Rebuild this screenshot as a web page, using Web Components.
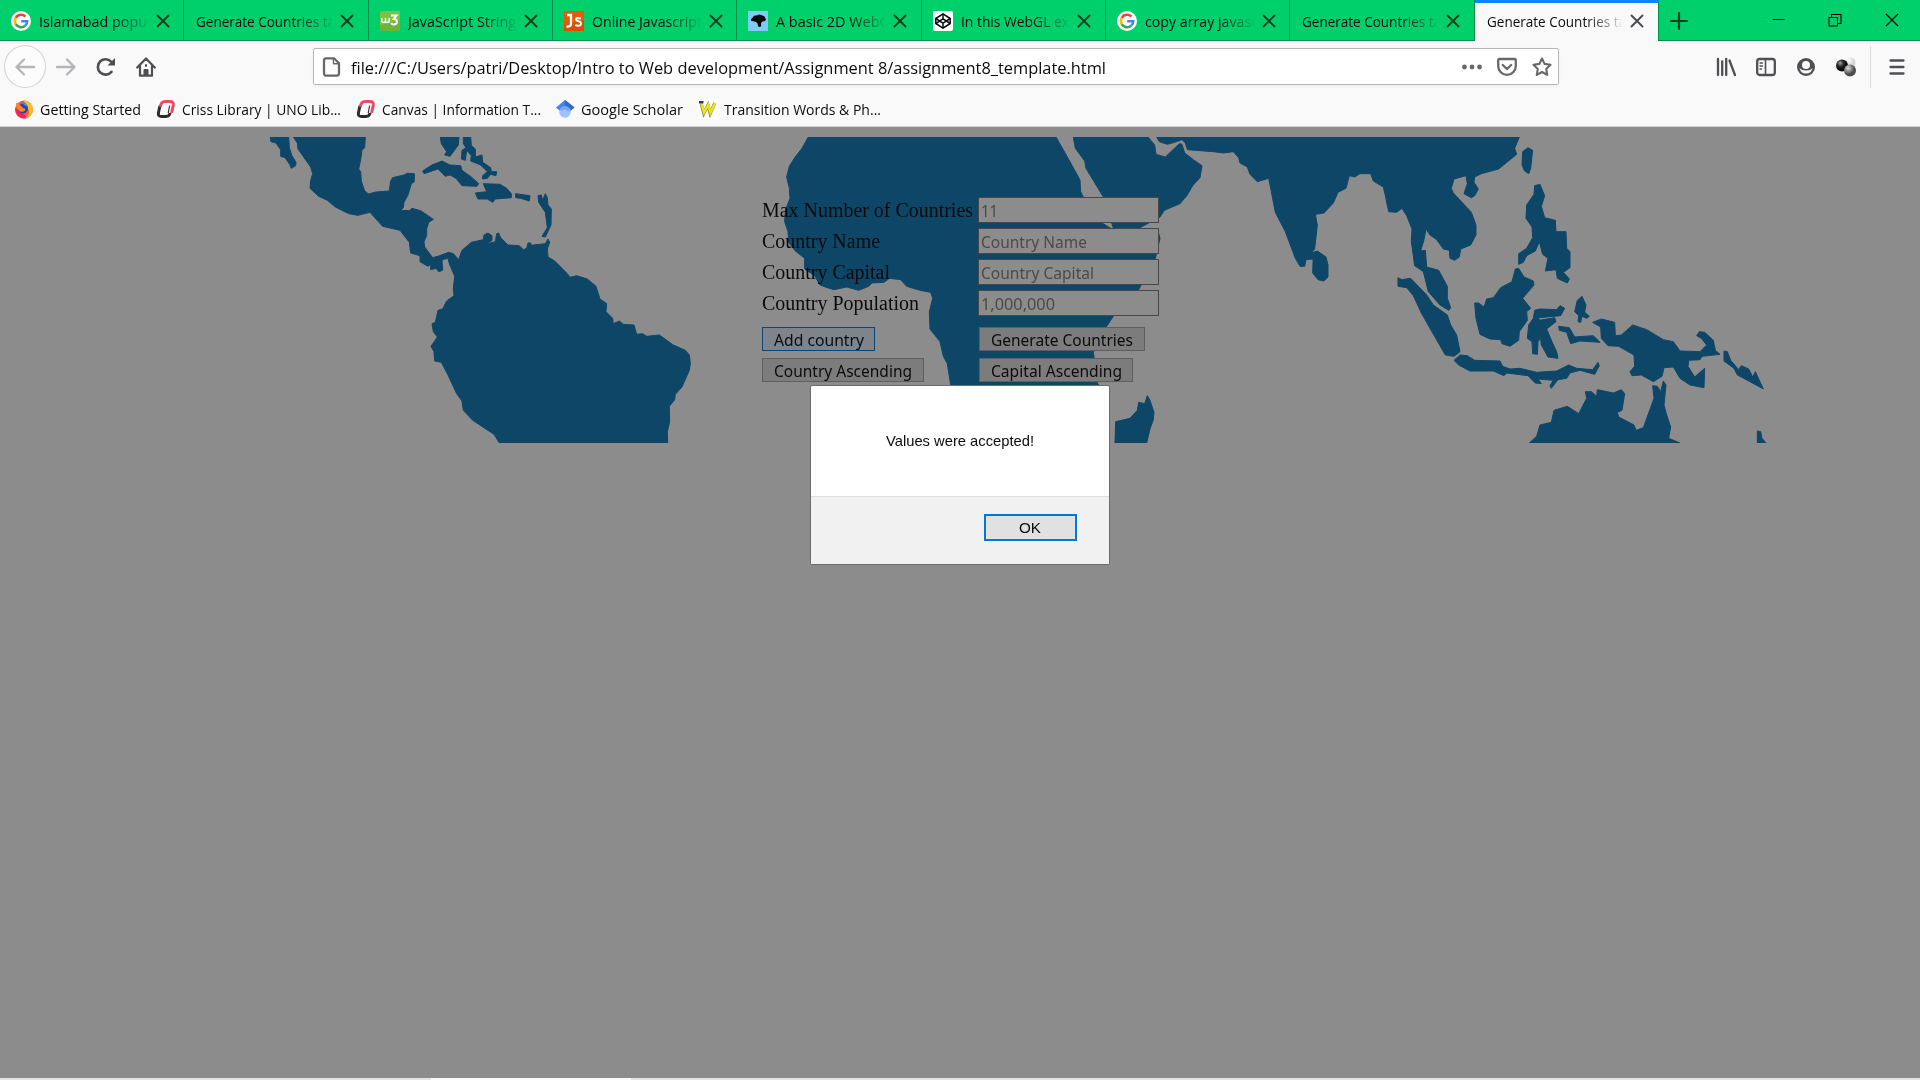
<!DOCTYPE html>
<html lang="en">
<head>
<meta charset="utf-8">
<title>Generate Countries table</title>
<style>
html,body{margin:0;padding:0;height:1080px;overflow:hidden;background:#8c8c8c}
</style>
</head>
<body>
<browser-window>
  <tab-strip slot="tabs">
    <browser-tab icon="google"><fit-text slot="title" w="108">Islamabad popu</fit-text></browser-tab>
    <browser-tab><fit-text slot="title" w="139">Generate Countries ta</fit-text></browser-tab>
    <browser-tab icon="w3"><fit-text slot="title" w="108">JavaScript String</fit-text></browser-tab>
    <browser-tab icon="js"><fit-text slot="title" w="110">Online Javascript</fit-text></browser-tab>
    <browser-tab icon="dino"><fit-text slot="title" w="114">A basic 2D WebG</fit-text></browser-tab>
    <browser-tab icon="codepen"><fit-text slot="title" w="108">In this WebGL ex</fit-text></browser-tab>
    <browser-tab icon="google"><fit-text slot="title" w="113">copy array javasc</fit-text></browser-tab>
    <browser-tab><fit-text slot="title" w="139">Generate Countries ta</fit-text></browser-tab>
    <browser-tab active><fit-text slot="title" w="139">Generate Countries ta</fit-text></browser-tab>
  </tab-strip>
  <nav-bar slot="nav"><fit-text w="755" size="16.7">file:///C:/Users/patri/Desktop/Intro to Web development/Assignment 8/assignment8_template.html</fit-text></nav-bar>
  <bookmark-bar slot="bookmarks">
    <book-mark icon="firefox"><fit-text w="101">Getting Started</fit-text></book-mark>
    <book-mark icon="uno"><fit-text w="159">Criss Library | UNO Lib...</fit-text></book-mark>
    <book-mark icon="uno"><fit-text w="159">Canvas | Information T...</fit-text></book-mark>
    <book-mark icon="scholar"><fit-text w="102">Google Scholar</fit-text></book-mark>
    <book-mark icon="w"><fit-text w="157">Transition Words &amp; Ph...</fit-text></book-mark>
  </bookmark-bar>
  <country-page></country-page>
</browser-window>
<script>
const ICONS = {
  google:'<svg viewBox="0 0 20 20"><circle cx="10" cy="10" r="10" fill="#fff"/><g fill="none" stroke-width="2.6"><path d="M14.4 5.6A6.2 6.2 0 0 0 4.7 6.8" stroke="#ea4335"/><path d="M4.7 6.8a6.2 6.2 0 0 0 0 6.4" stroke="#fbbc05"/><path d="M4.7 13.2a6.2 6.2 0 0 0 9.5 1.4" stroke="#34a853"/><path d="M14.2 14.6q2-1.7 2-4.4H10.2" stroke="#4285f4"/></g></svg>',
  w3:'<svg viewBox="0 0 20 20"><rect width="20" height="20" rx="1.5" fill="#7fc242"/><path d="M0 14L20 9v11H0z" fill="#6eb43a"/><path d="M1.8 7v3q0 1.5 1.8 1.5T5.500 10V7v3q0 1.500 1.800 1.500T9.200 10V7" fill="none" stroke="#fff" stroke-width="1.500"/><path d="M11 4.500h5.500L13.700 8q3.600.2 3.200 3.200-.6 2.600-3.600 2.200-1.600-.2-2.200-1.600" fill="none" stroke="#fff" stroke-width="2"/></svg>',
  js:'<svg viewBox="0 0 20 20"><rect width="20" height="20" fill="#d65200"/><path d="M0 0h20v9L0 14z" fill="#e35d08"/><path d="M3 4h4v8.500q0 3.500-4.500 3" fill="none" stroke="#fff" stroke-width="2.300"/><path d="M17 7.500q-5-1.500-5 .8c0 2.500 5 1.500 5 4.200 0 2.800-3.500 2.500-5.700 1.500" fill="none" stroke="#fff" stroke-width="2"/></svg>',
  dino:'<svg viewBox="0 0 20 20"><rect width="20" height="20" fill="#80cbf5"/><path d="M3 8.200L5 6.300 6 4.800 9.500 4.300 11 3.500 14 4.200 16.500 5.500 18 8.500 17 10 13.800 10.800 13 12.500 13.200 15.200 11.500 16 10.200 15.600 9.500 12.500 8 11 5.500 10.300 3.300 10z" fill="#070707"/></svg>',
  codepen:'<svg viewBox="0 0 20 20"><rect width="20" height="20" rx="2" fill="#fff"/><g fill="none" stroke="#0b0b0b" stroke-width="1.500" stroke-linejoin="round"><path d="M10 2.800l7.200 4.700v5l-7.200 4.700-7.200-4.700v-5z"/><path d="M2.800 7.500l7.200 4.700 7.200-4.700M2.800 12.500L10 7.800l7.200 4.700M10 2.800v5M10 12.200v5"/></g></svg>',
  firefox:'<svg viewBox="0 0 20 20"><circle cx="10" cy="10.500" r="9" fill="#ff5a2e"/><path d="M1.200 9Q1 15 5 18q4 2.500 8.500 1L6 12z" fill="#f5225c"/><path d="M9 1q9 1 10 9-1 8-8 9.500 6-5 3-10Q12 5 9 1z" fill="#ffbd1f"/><circle cx="9" cy="9.500" r="5" fill="#2c3fc4"/><path d="M2 4q4 1 7 5 3 0 2 2.500-2 2-5 1-4-3-4-8.500z" fill="#ff8a1a"/><path d="M7 2q5 1 7 6-3-1-4-2T7 2z" fill="#3a8dea"/></svg>',
  uno:'<svg viewBox="0 0 20 20"><rect width="20" height="20" fill="#fff"/><g fill="none"><path d="M14.200 14Q13.300 17.500 10 17.500H5.500Q1.800 17.500 2.400 14L4 6.500" stroke="#2b2b2b" stroke-width="3"/><path d="M4.300 8Q5 2.500 9 2.500h5q3.900 0 3.300 3.600L15.600 14" stroke="#ee4a62" stroke-width="3"/><path d="M13.700 6.500L12.200 14" stroke="#3b2c2f" stroke-width="1.200"/></g></svg>',
  scholar:'<svg viewBox="0 0 20 20"><path d="M10 1L1 8.500 5 12h10l4.500-3.500z" fill="#4285f4"/><path d="M10 1l9.500 7.500L15 12l-5-4z" fill="#3566c8"/><circle cx="10" cy="13" r="5.800" fill="#a0c3ff"/><path d="M4.700 10.600a5.800 5.800 0 0 1 10.600 0L13 12.500Q10 9.500 7 12z" fill="#76a7fa"/></svg>',
  w:'<svg viewBox="0 0 20 20"><rect width="20" height="20" fill="#fff"/><path d="M3 4l2.800 10.500L10 6l2.200 8.500L16.800 4" fill="none" stroke="#8a8a60" stroke-width="3.200"/><path d="M3.300 4l2.800 9.500L10.300 6l2.200 7.500L17.100 4" fill="none" stroke="#f0e414" stroke-width="2.500"/><path d="M1 3.200h4.500" stroke="#30308c" stroke-width="2.400"/></svg>'
};
function element(name, markup) {
  customElements.define(name, class extends HTMLElement {
    constructor() {
      super();
      this.attachShadow({mode:'open'}).innerHTML = typeof markup === 'function' ? markup(this) : markup;
    }
  });
}

element('browser-window', `<style>
:host{display:flex;flex-direction:column;width:1920px;height:1080px;background:#8c8c8c;font-family:"Open Sans",sans-serif;color:#0c0c0d}
.bars{background:#f9f9fa;height:85px;border-bottom:1px solid #d0d0d1;display:flex;flex-direction:column}
.page{flex:1;min-height:0}
.edge{height:2px;background:#e5e5e5;display:flex}.edge i{width:200px;margin-left:431px;background:#fafafa}
</style><slot name="tabs"></slot><div class="bars"><slot name="nav"></slot><slot name="bookmarks"></slot></div><div class="page"><slot></slot></div><div class="edge"><i></i></div>`);

element('tab-strip', `<style>
:host{display:flex;height:41px;background:linear-gradient(#00d06c 40px,#008f4a 40px)}
.tabs{display:flex;width:1659px}
.plus{width:40px;display:flex;align-items:center;justify-content:center}
.win{margin-left:auto;margin-right:7px;display:flex;align-items:flex-start}
.win svg{width:56.500px;height:39px}
</style><div class="tabs"><slot></slot></div>
<div class="plus"><svg width="18" height="18" viewBox="0 0 18 18"><path d="M9 1v16M1 9h16" stroke="#07421f" stroke-width="2.200" stroke-linecap="round"/></svg></div>
<div class="win">
<svg viewBox="0 0 56.500 39"><path d="M28.500 19.500h12" stroke="#000" stroke-width="1"/></svg>
<svg viewBox="0 0 56.500 39"><path d="M29 17.500h8.500v8.500H29zM31.500 17.500v-3H41v9h-3.500" fill="none" stroke="#000" stroke-width="1.100"/></svg>
<svg viewBox="0 0 56.500 39"><path d="M29 14l12 12M41 14L29 26" stroke="#000" stroke-width="1.100"/></svg></div>`);

element('browser-tab', e => `<style>
:host{display:flex;flex:1 1 0;min-width:0;box-sizing:border-box;align-items:center;height:41px;padding:1px 13.500px 0 12px;border-right:1px solid #008f4a;--x:#08401f}
:host([active]){background:#f9f9fa;border-top:3px solid #0a84ff;padding-top:0;padding-bottom:2px;--x:#4a4a4f}
.ico{width:20px;height:20px;margin:0 8px 0 -1px;flex:none}.ico svg{display:block;width:20px;height:20px}
.t{flex:1;min-width:0;overflow:hidden;height:26px;line-height:26px;-webkit-mask-image:linear-gradient(to left,transparent 0,rgba(0,0,0,.4) 12px,#000 38px);mask-image:linear-gradient(to left,transparent 0,rgba(0,0,0,.4) 12px,#000 38px)}
.c{width:14px;height:14px;flex:none;margin-left:7px}
</style>${e.hasAttribute('icon')?`<span class="ico">${ICONS[e.getAttribute('icon')]}</span>`:''}<div class="t"><slot name="title"></slot></div>
<svg class="c" viewBox="0 0 14 14"><path d="M1.500 1.500l11 11M12.500 1.500l-11 11" stroke="var(--x)" stroke-width="1.900" stroke-linecap="round"/></svg>`);

element('nav-bar', `<style>
:host{display:flex;align-items:center;height:51px;box-sizing:border-box;padding-left:4px}
svg{display:block;flex:none;fill:none;stroke:#4f4f53;stroke-width:2.300;stroke-linecap:round;stroke-linejoin:round}
.left{display:flex;align-items:center;width:309px;flex:none}
.back{width:40px;height:41px;border:1px solid #d2d2d3;border-radius:50%;background:#fcfcfc;display:flex;align-items:center;justify-content:center}
.fwd{margin-left:10px}.rel{margin-left:20px}.home{margin-left:20px}
.url{display:flex;flex:none;align-items:center;width:1246px;height:37px;box-sizing:border-box;border:1px solid #b8b8ba;border-radius:2px;background:#fff;padding:0 6px 0 8px;box-shadow:0 1px 3px rgba(0,0,0,.06)}
.txt{margin-left:9px;flex:1;line-height:24px;padding-top:2px}
.url svg{stroke:#68686b}
.acts{display:flex;gap:15px}
.right{display:flex;flex:none;align-items:center;margin-left:157px;gap:20px}
.sep{width:1px;height:42px;background:#dcdcdd;margin:0 -2px 0 -6px}
</style>
<div class="left">
<div class="back"><svg width="20" height="20" viewBox="0 0 20 20" style="stroke:#b5b5b7"><path d="M19 10H1.500M9 2.500L1.500 10 9 17.500"/></svg></div>
<svg class="fwd" width="20" height="20" viewBox="0 0 20 20" style="stroke:#b5b5b7"><path d="M1 10h17.500M11 2.500l7.500 7.500-7.500 7.500"/></svg>
<svg class="rel" width="20" height="20" viewBox="0 0 20 20"><path d="M15.500 14.800A7.700 7.700 0 1 1 15.500 5" stroke-width="2.600"/><path d="M11.500 8.500h7.500V1z" fill="#4f4f53" stroke="none"/></svg>
<svg class="home" width="20" height="20" viewBox="0 0 20 20"><path d="M1.200 10.500L10 1.500l8.800 9M4 9v9.700h12V9" stroke-width="2.200"/><path d="M8 18v-5.500h4V18" fill="#4f4f53" stroke-width="1"/><path d="M10 8v1" stroke-width="2"/></svg>
</div>
<div class="url"><svg width="20" height="20" viewBox="0 0 20 20"><path d="M4 1.300h8l5 5v10q0 2.400-2.400 2.400H4.400Q2 18.700 2 16.300V3.300q0-2 2-2z"/><path d="M11.500 1.500v5.300H17" stroke-width="1.400"/></svg>
<div class="txt"><slot></slot></div><div class="acts">
<svg width="20" height="20" viewBox="0 0 20 20"><g fill="#68686b" stroke="none"><circle cx="2.500" cy="10" r="2.400"/><circle cx="10" cy="10" r="2.400"/><circle cx="17.500" cy="10" r="2.400"/></g></svg>
<svg width="20" height="20" viewBox="0 0 20 20"><path d="M2.500 2h15q1.300 0 1.300 1.300V9a8.800 8.800 0 0 1-17.600 0V3.300Q1.200 2 2.500 2z"/><path d="M5.800 8l4.200 4 4.200-4"/></svg>
<svg width="20" height="20" viewBox="0 0 20 20"><path d="M10 1.500l2.600 5.400 5.900.8-4.300 4.200 1 6L10 15l-5.200 2.900 1-6L1.500 7.700l5.900-.8z" stroke-width="2.100"/></svg>
</div></div>
<div class="right">
<svg width="20" height="20" viewBox="0 0 20 20"><path d="M2 2v16M6.200 4.500V18M10.200 2v16M13.500 3.500L19 18" style="stroke-width:2.300"/></svg>
<svg width="20" height="20" viewBox="0 0 20 20"><rect x="1.200" y="2" width="17.600" height="16" rx="2.500"/><path d="M9.500 2v16" stroke-width="1.600"/><path d="M4 6h2.500M4 9h2.500M4 12h1.500" stroke-width="1.300"/></svg>
<svg width="20" height="20" viewBox="0 0 20 20" style="stroke:none"><circle cx="10" cy="10" r="9" fill="#4f4f53"/><circle cx="10" cy="8" r="4" fill="#f9f9fa"/><path d="M3.500 11q1 5.500 6.500 5.500t6.500-5.500q-2 2.500-6.500 2.500T3.500 11z" fill="#f9f9fa"/></svg>
<svg width="20" height="20" viewBox="0 0 20 20" style="stroke:none"><defs><radialGradient id="a" cx=".35" cy=".3"><stop offset="0" stop-color="#aaa"/><stop offset=".5" stop-color="#333"/><stop offset="1" stop-color="#0a0a0a"/></radialGradient><radialGradient id="b" cx=".35" cy=".3"><stop offset="0" stop-color="#ddd"/><stop offset="1" stop-color="#4c4c4c"/></radialGradient><radialGradient id="c" cx=".35" cy=".3"><stop offset="0" stop-color="#fff"/><stop offset="1" stop-color="#d3d3d3"/></radialGradient></defs><circle cx="14.500" cy="5.500" r="5" fill="url(#c)"/><circle cx="6" cy="8.500" r="6" fill="url(#a)"/><circle cx="14" cy="13.500" r="6" fill="url(#b)"/></svg>
<i class="sep"></i>
<svg width="16" height="20" viewBox="0 0 16 20"><path d="M1.500 3.500h13M1.500 10h13M1.500 16.500h13"/></svg>
</div>`);

element('bookmark-bar', `<style>:host{display:flex;align-items:center;height:34px;padding:0 0 0 14px;gap:14.800px}</style><slot></slot>`);
element('book-mark', e => `<style>:host{display:flex;align-items:center;gap:6px;line-height:24px}svg{width:20px;height:20px;display:block}</style>${ICONS[e.getAttribute('icon')]}<slot></slot>`);

element('world-map', `<style>:host{display:block}svg{display:block;filter:blur(.35px)}</style>
<svg width="1904" height="306" viewBox="8 137 1904 306" fill="#0e4668" stroke="#0e4668" stroke-width="3" stroke-linejoin="round">
<g transform="translate(250 125) scale(.33333)">
<path d="M61 36L116 36L118 68L126 92L138 112L137 122L124 130L119 118L105 98L92 94L92 74L78 54L63 50Z"/>
<path d="M130 36L346 36L344 68L336 76L332 104L326 132L332 140L334 168L344 198L356 207L378 201L418 198L422 168L428 158L462 150L472 145L493 146L493 170L484 176L474 210L462 232L460 248L452 256L478 257L486 250L512 257L550 283L536 292L530 312L530 332L522 350L524 366L548 398L566 393L596 382L610 386L626 404L636 376L664 352L700 344L702 330L714 324L726 332L726 346L712 356L736 350L740 326L746 324L752 338L766 352L774 360L808 362L820 374L830 370L834 354L842 354L844 361L886 356L894 342L899 352L892 372L894 396L914 408L936 430L952 446L960 457L980 452L1012 462L1038 484L1050 522L1070 536L1068 560L1088 580L1090 596L1108 588L1120 598L1152 600L1160 628L1178 626L1190 634L1228 630L1270 660L1306 676L1318 690L1321 716L1318 736L1296 786L1276 808L1274 824L1258 844L1259 890L1252 920L1253 954L748 954L732 928L668 886L640 856L636 828L620 806L594 750L574 712L554 708L552 680L543 664L562 636L550 620L546 596L556 592L564 556L578 552L590 528L612 512L610 490L614 454L598 416L594 400L576 404L578 436L566 440L558 430L542 434L542 418L534 424L510 410L510 392L482 384L478 352L450 316L398 304L360 262L324 271L296 266L256 246L232 226L206 214L180 190L182 166L188 146L182 126L158 92L144 72L142 54Z"/>
<path d="M571 36L627 36L625 60L600 94L584 90L590 80L574 56ZM640 36L662 36L664 62L676 72L676 96L696 90L698 112L722 128L724 140L740 140L738 152L722 148L712 160L698 162L698 152L712 140L692 120L662 108L664 92L650 76L646 106L634 102L636 76L648 68L640 56ZM518 138L546 120L576 108L600 120L632 122L636 136L664 156L686 176L680 184L636 182L618 160L600 150L586 154L564 132L522 146ZM700 176L750 178L770 190L784 206L784 218L736 222L728 232L712 222L684 222L676 204L710 200ZM797 206L840 212L838 228L812 220L797 218ZM864 212L874 210L878 226L886 206L892 218L894 240L904 252L903 300L886 336L876 334L892 308L886 262L866 232Z"/></g>
<g transform="translate(740 125) scale(.33333)"><path d="M205 36L186 70L164 98L148 124L140 156L148 190L150 220L136 256L134 290L144 320L146 352L166 378L194 400L194 432L224 452L240 480L262 488L282 494L320 486L356 496L386 484L396 474L432 472L448 460L482 464L500 484L540 496L572 502L578 520L568 560L570 612L600 650L610 694L622 716L632 780L640 800L1088 800L1070 770L1062 696L1060 682L1100 604L1120 574L1196 494L1246 400L1260 340L1254 318L1115 312L1080 290L1030 216L1022 200L1020 165L990 110L948 36Z"/></g>
<g transform="translate(1050 125) scale(.33333)"><path d="M70 36H294L314 60L318 88L346 96L388 56L396 58L404 84L430 104L456 122L450 158L428 182L412 210L390 236L343 256L330 276L270 308L190 309L160 216L108 130L104 108L76 70Z"/>
<path d="M320 36L328 50L352 58L374 52L396 44L406 54L412 74L490 80L520 84L550 80L566 98L570 114L592 126L600 148L622 170L656 160L662 190L676 262L706 320L736 400L750 424L764 424L768 404L790 402L788 378L794 372L802 300L796 268L822 264L850 234L864 202L888 190L898 152L914 156L930 146L962 146L970 168L1000 186L1006 212L1016 260L1040 262L1056 250L1070 272L1086 312L1084 350L1094 422L1120 440L1135 500L1170 540L1196 556L1202 548L1192 520L1192 484L1166 436L1130 426L1126 376L1112 378L1122 344L1128 312L1140 330L1160 344L1180 372L1198 376L1200 400L1214 406L1228 396L1232 372L1262 360L1278 330L1278 300L1264 262L1210 204L1204 190L1212 162L1248 152L1252 176L1242 206L1264 218L1274 212L1285 192L1272 172L1274 156L1294 146L1346 132L1400 88L1394 70L1408 36Z"/>
<path d="M790 382L802 378L828 396L834 420L834 456L822 468L804 464L788 444ZM292 812L300 826L312 862L310 884L300 912L290 954L195 954L197 890L240 880L262 856L266 832L284 836Z"/></g>
<g transform="translate(1380 125) scale(.33333)">
<path d="M428 80L444 68L458 76L452 130L446 146L434 138L426 120Z"/>
<path d="M464 182L480 178L494 212L484 244L494 278L526 286L528 320L558 320L560 370L570 380L570 428L550 442L568 462L562 474L532 460L528 434L496 438L504 400L488 388L478 350L466 378L440 392L430 412L416 418L416 386L440 370L458 338L456 306L438 280L440 240L462 208Z"/>
<path d="M54 458L66 464L92 460L140 510L160 540L202 570L212 600L230 630L240 680L222 694L196 690L150 610L124 564L100 512L80 488L54 484Z"/>
<path d="M222 706L240 690L262 692L284 706L360 708L368 724L390 732L420 730L470 742L530 738L566 720L590 730L638 734L654 712L658 722L644 748L600 736L570 744L560 760L534 764L514 790L510 782L520 766L474 762L484 776L466 774L444 752L380 744L372 752L340 738L270 738L236 720Z"/>
<path d="M284 534L296 534L312 546L320 522L340 518L362 488L396 470L406 432L416 430L432 456L460 468L462 480L428 520L452 550L440 560L442 586L418 620L416 646L390 664L366 656L362 644L330 642L300 628L288 580Z"/>
<path d="M464 556L480 552L530 554L540 542L554 550L542 572L476 578L478 586L524 578L528 590L500 612L516 650L530 680L534 700L504 696L484 660L482 640L474 650L472 688L458 686L456 650L442 640L446 600L460 580Z"/>
<path d="M536 604L568 608L584 636L640 632L660 652L600 648L572 656L560 622L538 616ZM592 526L606 514L618 540L614 562L628 574L620 580L606 574L602 592L594 590L596 572L584 560Z"/>
<path d="M638 592L664 582L704 592L706 632L724 630L758 600L800 614L850 644L880 650L900 678L960 680L980 660L964 640L950 632L958 620L974 622L1000 646L1006 676L1020 688L966 694L960 704L926 706L924 724L944 756L974 730L972 788L930 780L900 760L880 726L852 728L846 754L820 770L784 750L756 752L750 740L764 724L762 690L716 664L684 662L664 640L662 606Z"/>
<path d="M1032 678L1042 680L1052 706L1076 734L1084 722L1106 732L1118 756L1126 740L1150 792L1110 770L1072 750L1062 730L1032 708Z"/>
<path d="M448 954L470 934L480 900L514 892L522 856L562 844L596 866L620 820L616 800L634 800L650 814L652 794L700 804L724 794L734 806L726 856L712 862L716 876L762 900L768 916L790 908L822 820L818 782L832 784L842 800L850 768L858 780L852 840L860 870L872 906L866 940L900 954ZM1132 954L1132 918L1142 920L1146 940L1158 954Z"/></g>
</svg>`);

element('form-row', `<style>
:host{display:flex;height:26px;margin-bottom:5px}
.l{width:216px;font:20px/26px "Liberation Serif",serif;white-space:nowrap;color:#0b0b0b}
.f{box-sizing:border-box;width:181px;height:26px;border:1px solid #474747;background:#8c8c8c;color:#4a4a4a;padding:1px 2px;line-height:24px}
</style><div class="l"><slot name="label"></slot></div><div class="f"><slot></slot></div>`);
element('page-button', `<style>
:host{display:block;box-sizing:border-box;height:24px;border:1px solid #5f5f5f;background:#7c7c7c;color:#0b0b0b;padding:1px 0 0 11px;line-height:22px}
:host([hot]){border-color:#0c4678;background:#7e848b}
</style><slot></slot>`);

element('alert-dialog', `<style>
:host{display:flex;flex-direction:column;box-sizing:border-box;width:300px;height:180px;border:1px solid #6b6b6b;border-radius:2px;background:#fff;overflow:hidden;color:#0b0b0b}
.m{height:110px;box-sizing:border-box;padding-bottom:1px;display:flex;align-items:center;justify-content:center;line-height:20px}
.b{flex:1;border-top:1px solid #dfdfdf;background:#f1f1f1;display:flex;justify-content:flex-end;align-items:flex-start;padding:17px 32px 0 0}
.ok{width:93px;height:27px;box-sizing:border-box;border:2px solid #0078d7;background:#e1e1e1;display:flex;align-items:center;justify-content:center;line-height:20px;padding-right:1px}
</style><div class="m"><slot></slot></div><div class="b"><div class="ok"><slot name="ok"></slot></div></div>`);

element('country-page', `<style>
:host{display:block;position:relative;padding:10px 8px 0}
form{position:absolute;left:762px;top:70px;width:400px}
.btns{display:grid;grid-template-columns:217px auto;row-gap:7px;margin-top:11px;justify-items:start}
alert-dialog{position:absolute;left:810px;top:258px}
</style>
<world-map></world-map>
<form>
<form-row><fit-text slot="label" font="Liberation Serif" size="20" w="211">Max Number of Countries</fit-text><fit-text font="Noto Sans" size="16" w="17">11</fit-text></form-row>
<form-row><fit-text slot="label" font="Liberation Serif" size="20" w="118">Country Name</fit-text><fit-text font="Noto Sans" size="16" w="106">Country Name</fit-text></form-row>
<form-row><fit-text slot="label" font="Liberation Serif" size="20" w="128">Country Capital</fit-text><fit-text font="Noto Sans" size="16" w="113">Country Capital</fit-text></form-row>
<form-row><fit-text slot="label" font="Liberation Serif" size="20" w="157">Country Population</fit-text><fit-text font="Noto Sans" size="16" w="74">1,000,000</fit-text></form-row>
<div class="btns">
<page-button hot style="width:113px"><fit-text font="Noto Sans" size="16" w="90">Add country</fit-text></page-button>
<page-button style="width:166px"><fit-text font="Noto Sans" size="16" w="142">Generate Countries</fit-text></page-button>
<page-button style="width:162px"><fit-text font="Noto Sans" size="16" w="138">Country Ascending</fit-text></page-button>
<page-button style="width:154px"><fit-text font="Noto Sans" size="16" w="131">Capital Ascending</fit-text></page-button>
</div></form>
<alert-dialog><fit-text font="Liberation Sans" size="15" w="148">Values were accepted!</fit-text><fit-text slot="ok" font="Liberation Sans" size="15" w="22">OK</fit-text></alert-dialog>`);

/* A single line of text condensed horizontally to a given width. */
customElements.define('fit-text', class extends HTMLElement {
  constructor() {
    super();
    this.attachShadow({mode:'open'}).innerHTML = '<style>:host{display:block;white-space:pre}span{display:inline-block;transform-origin:0 0;vertical-align:top}</style><span><slot></slot></span>';
  }
  connectedCallback() {
    const w = +this.getAttribute('w'), s = this.shadowRoot.querySelector('span');
    this.style.width = w + 'px';
    this.style.fontFamily = '"' + (this.getAttribute('font') || 'Open Sans') + '",sans-serif';
    this.style.fontSize = (this.getAttribute('size') || 15) + 'px';
    s.style.transform = 'scaleX(' + w / s.getBoundingClientRect().width + ')';
  }
});
</script>
</body>
</html>
